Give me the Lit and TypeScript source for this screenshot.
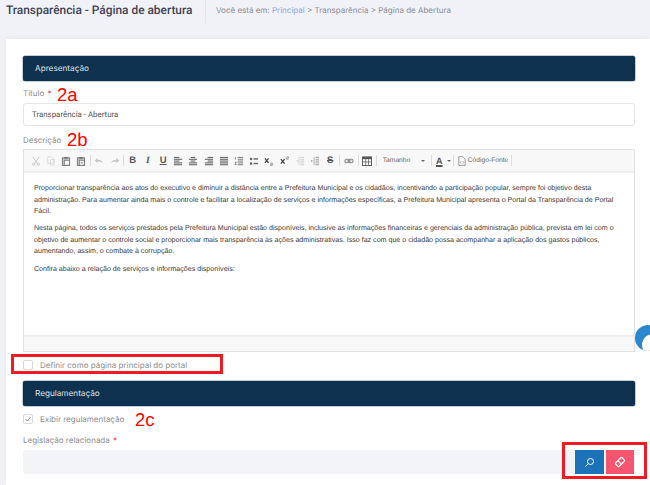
import { LitElement, html, css, svg } from "lit";
import { customElement } from "lit/decorators.js";

const ic = (body: unknown, w = 15.2) => html`<span class="btn" style="width:${w}px"><svg width="10" height="10" viewBox="0 0 11 11">${body}</svg></span>`;
const sep = html`<span class="sep"></span>`;
const G = "#666";
const L = "#c4c4c4";
const lines = (rows: [number, number][], c = G) => rows.map(([a, b], i) => svg`<rect x="${a}" y="${1 + i * 2}" width="${b - a}" height="1.2" fill="${c}"/>`);

@customElement("app-root")
export class AppRoot extends LitElement {
  static styles = css`
    :host { display: block; width: 650px; height: 485px; overflow: hidden; position: relative; background: #f1f2f8; font-family: "Inter", "Liberation Sans", sans-serif; color: #8a8a8a; text-rendering: geometricPrecision; }
    .top { height: 39px; display: flex; align-items: flex-start; padding-left: 6px; box-sizing: border-box; }
    h1 { margin: 0; padding-top: 1px; width: 199px; font: 500 11.9px/19px Roboto, sans-serif; color: #3f4254; white-space: nowrap; box-sizing: content-box; }
    .crumbs { border-left: 1px solid #e6e7ee; height: 23px; padding-left: 10px; font-size: 8px; line-height: 20px; color: #8b8b95; white-space: nowrap; }
    .crumbs b { font-weight: 400; color: #88a7d8; }
    .card { background: #fff; margin-left: 6px; height: 446px; padding: 17px 15px 0 17px; box-sizing: border-box; box-shadow: 0 -2px 4px rgba(0,0,0,.03); }
    .bar { height: 25px; background: #0e314f; border-radius: 2px; color: #dfe5ea; font-size: 8.2px; line-height: 25px; padding-left: 12px; box-shadow: 0 0 0 .5px #8c9aa8; }
    label { display: block; font-size: 8px; line-height: 12px; color: #8d8d8d; }
    label i { font-style: normal; color: #e33; margin-left: 1px; }
    .l1 { margin-top: 6px; height: 16px; }
    .l2 { margin-top: 8px; height: 15px; }
    .input { height: 23px; border: 1px solid #e6e6e6; border-radius: 3px; box-sizing: border-box; font: 7.9px/21px Roboto, sans-serif; color: #555; padding-left: 8px; }
    .editor { height: 203px; border: 1px solid #e2e2e2; box-sizing: border-box; display: flex; flex-direction: column; }
    .tools { height: 23px; background: #f8f8f8; border-bottom: 2px solid #eee; display: flex; align-items: center; padding-left: 4px; flex: none; box-sizing: border-box; font: 6.7px "Liberation Sans", sans-serif; color: #666; }
    .btn { display: inline-flex; justify-content: center; align-items: center; flex: none; }
    .sep { width: 1px; height: 11px; background: #ddd; margin: 0 1px; flex: none; }
    .t { font-weight: 700; font-size: 9.5px; color: #555; width: 15.2px; text-align: center; flex: none; font-family: "Liberation Sans", sans-serif; }
    .size { width: 52px; padding: 0 5px; box-sizing: border-box; display: flex; justify-content: space-between; flex: none; }
    .caret { width: 0; height: 0; border: 2px solid transparent; border-top: 2.5px solid #666; border-bottom: 0; align-self: center; }
    .body { flex: 1; padding: 10px 10px 0; font: 7.1px/11.6px "Liberation Sans", Arial, sans-serif; color: #3c3c3c; }
    .body p { margin: 0 0 5.5px; white-space: nowrap; }
    .foot { height: 16px; background: #f8f8f8; border-top: 2px solid #eee; flex: none; box-sizing: border-box; }
    .check { display: flex; align-items: center; gap: 7px; font-size: 8px; color: #8d8d8d; height: 12px; }
    .box { width: 10px; height: 10px; border: 1px solid #d8d8e0; border-radius: 2px; box-sizing: border-box; display: flex; flex: none; }
    .c1 { margin: 6.5px 0 10.5px; }
    .c2 { margin: 7px 0 9px; }
    .legis { height: 16px; }
    .field { height: 24px; background: #f3f4f8; border-radius: 3px; display: flex; justify-content: flex-end; gap: 2px; padding-right: 1px; }
    .act { height: 24px; display: flex; align-items: center; justify-content: center; }
    .blue { width: 29px; background: #1b72b8; }
    .pink { width: 28px; background: #f6556f; }
    .ann { position: absolute; color: #f00; font: 18.5px/20px "Liberation Sans", sans-serif; }
    .red { position: absolute; border: 3px solid #ed1c24; box-sizing: border-box; }
    .r1 { left: 11px; top: 354px; width: 212px; height: 20px; }
    .r2 { left: 562px; top: 442px; width: 85px; height: 37px; }
    .a1 { left: 57px; top: 85px; }
    .a2 { left: 67px; top: 130px; }
    .a3 { left: 135px; top: 410px; }
    .fab { position: absolute; left: 635px; top: 325px; width: 26px; height: 26px; border-radius: 50%; background: #2a87cf; overflow: hidden; }
    .fab::after { content: ""; position: absolute; left: 7px; top: 9px; width: 22px; height: 22px; border-radius: 50%; background: #fff; }
    .it { font-style: italic; font-family: "Liberation Serif", serif; }
    .un { text-decoration: underline; }
    .st { text-decoration: line-through; }
    .fa { width: 13px; font-size: 9px; text-decoration: underline; text-decoration-thickness: 2px; }
    .fc { margin: 0 1px; }
    .code { margin-left: -1px; flex: none; }
    .last { margin-left: 3px; }
  `;

  render() {
    const tools = html`
      ${ic(svg`<path d="M2 1l5 7M9 1L4 8" stroke="${L}" fill="none"/><circle cx="3" cy="9" r="1.3" fill="none" stroke="${L}"/><circle cx="8" cy="9" r="1.3" fill="none" stroke="${L}"/>`)}
      ${ic(svg`<path d="M2 1h4l2 2v5H2zM5 4h4v6H5z" fill="#fff" stroke="#d4d4d4" stroke-width=".9"/>`)}
      ${ic(svg`<rect x="1.5" y="2" width="8" height="8.5" fill="#bbb" stroke="#777"/><rect x="3.5" y="1" width="4" height="2" fill="#777"/><rect x="4" y="5" width="5" height="5" fill="#fff" stroke="#777" stroke-width=".7"/>`)}
      ${ic(svg`<rect x="1.5" y="2" width="8" height="8.5" fill="#bbb" stroke="#777"/><rect x="3.5" y="1" width="4" height="2" fill="#777"/><rect x="4" y="5" width="5" height="5" fill="#fff" stroke="#777" stroke-width=".7"/><path d="M5 7.5h3" stroke="#777"/>`)}
      ${sep}
      ${ic(svg`<path d="M1 5l3-3v2c3 0 5 1 6 4-2-2-3-2-6-2v2z" fill="${L}"/>`)}
      ${ic(svg`<path d="M10 5L7 2v2C4 4 2 5 1 8c2-2 3-2 6-2v2z" fill="${L}"/>`)}
      ${sep}
      <span class="t">B</span>
      <span class="t it">I</span>
      <span class="t un">U</span>
      ${ic(lines([[1, 7], [1, 10], [1, 7], [1, 10], [1, 10]]))}
      ${ic(lines([[3, 8], [1, 10], [3, 8], [1, 10], [1, 10]]))}
      ${ic(lines([[4, 10], [1, 10], [4, 10], [1, 10], [1, 10]]))}
      ${ic(lines([[1, 10], [1, 10], [1, 10], [1, 10], [1, 10]]))}
      ${ic(svg`${lines([[4, 10], [4, 10], [4, 10], [4, 10], [4, 10]], "#888")}<path d="M1.5 1v3M1 7h1.6L1 9.5h2" stroke="#666" stroke-width=".8" fill="none"/>`)}
      ${ic(svg`<rect x="1" y="2" width="2.5" height="2.5" fill="${G}"/><rect x="1" y="7" width="2.5" height="2.5" fill="${G}"/><rect x="5" y="2.5" width="5" height="1.5" fill="${G}"/><rect x="5" y="7.5" width="5" height="1.5" fill="${G}"/>`)}
      ${ic(svg`<path d="M1 2.5l4 5M5 2.5l-4 5" stroke="#444" stroke-width="1.4"/><path d="M7 8h2.5v1.2H7v1.3h2.5" stroke="#777" stroke-width=".7" fill="none"/>`)}
      ${ic(svg`<path d="M1 3.5l4 5M5 3.5l-4 5" stroke="#444" stroke-width="1.4"/><path d="M7 1h2.5v1.2H7v1.3h2.5" stroke="#777" stroke-width=".7" fill="none"/>`)}
      ${ic(svg`${lines([[6, 10], [6, 10], [6, 10], [6, 10], [6, 10]], "#d4d4d4")}<path d="M4.5 1v9" stroke="#d4d4d4"/><path d="M3.5 4L1 5.5 3.5 7z" fill="#d4d4d4"/>`)}
      ${ic(svg`${lines([[6, 10], [6, 10], [6, 10], [6, 10], [6, 10]], "#aaa")}<path d="M4.5 1v9" stroke="#aaa"/><path d="M1 4l2.5 1.5L1 7z" fill="#aaa"/>`)}
      <span class="t st">S</span>
      ${sep}
      ${ic(svg`<rect x="1" y="3.5" width="4.8" height="4" rx="2" fill="none" stroke="#888" stroke-width="1.2"/><rect x="5.2" y="3.5" width="4.8" height="4" rx="2" fill="none" stroke="#888" stroke-width="1.2"/><path d="M3 5.5h5" stroke="#888"/>`, 16)}
      ${sep}
      ${ic(svg`<rect x=".5" y="1" width="10" height="9.5" fill="#fff" stroke="#555"/><rect x=".5" y="1" width="10" height="2.5" fill="#555"/><path d="M4 3.5v7M7.2 3.5v7M.5 6.5h10" stroke="#555" stroke-width=".8"/>`, 15)}
      ${sep}
      <span class="size">Tamanho<span class="caret"></span></span>
      ${sep}
      <span class="t fa">A</span>
      <span class="caret fc"></span>
      ${sep}
      ${ic(svg`<path d="M2 .8h4.5L9 3.3v7H2z" fill="#fff" stroke="#777" stroke-width=".8"/><path d="M4.7 5.5L3.5 7l1.2 1.5M6.3 5.5L7.5 7 6.3 8.5" stroke="#777" stroke-width=".7" fill="none"/>`, 14)}
      <span class="code">Código-Fonte</span>
      <span class="sep last"></span>
    `;
    return html`
      <div class="top">
        <h1>Transparência - Página de abertura</h1>
        <div class="crumbs">Você está em: <b>Principal</b> &gt; Transparência &gt; Página de Abertura</div>
      </div>
      <div class="card">
        <div class="bar">Apresentação</div>
        <label class="l1">Título <i>*</i></label>
        <div class="input">Transparência - Abertura</div>
        <label class="l2">Descrição</label>
        <div class="editor">
          <div class="tools">${tools}</div>
          <div class="body">
            <p>Proporcionar transparência aos atos do executivo e diminuir a distância entre a Prefeitura Municipal e os cidadãos, incentivando a participação popular, sempre foi objetivo desta<br>administração. Para aumentar ainda mais o controle e facilitar a localização de serviços e informações específicas, a Prefeitura Municipal apresenta o Portal da Transparência de Portal<br>Fácil.</p>
            <p>Nesta página, todos os serviços prestados pela Prefeitura Municipal estão disponíveis, inclusive as informações financeiras e gerenciais da administração pública, prevista em lei com o<br>objetivo de aumentar o controle social e proporcionar mais transparência às ações administrativas. Isso faz com que o cidadão possa acompanhar a aplicação dos gastos públicos,<br>aumentando, assim, o combate à corrupção.</p>
            <p>Confira abaixo a relação de serviços e informações disponíveis:</p>
          </div>
          <div class="foot"></div>
        </div>
        <div class="check c1"><span class="box"></span>Definir como página principal do portal</div>
        <div class="bar">Regulamentação</div>
        <div class="check c2"><span class="box"><svg width="8" height="8" viewBox="0 0 8 8"><path d="M1.5 4l2 2L6.5 2" fill="none" stroke="#8a8fa8"/></svg></span>Exibir regulamentação</div>
        <label class="legis">Legislação relacionada <i>*</i></label>
        <div class="field">
          <div class="act blue"><svg width="11" height="11" viewBox="0 0 11 11"><circle cx="6.5" cy="4.5" r="3" fill="none" stroke="#fff"/><path d="M4.3 6.7L1.5 9.5" stroke="#fff"/></svg></div>
          <div class="act pink"><svg width="12" height="12" viewBox="0 0 12 12"><g transform="rotate(-45 6 6)" fill="none" stroke="#fff" stroke-width="1.2"><rect x="1.5" y="3.5" width="9" height="5" rx="1"/><path d="M5.5 3.5v5"/></g></svg></div>
        </div>
      </div>
      <div class="ann a1">2a</div>
      <div class="ann a2">2b</div>
      <div class="ann a3">2c</div>
      <div class="red r1"></div>
      <div class="red r2"></div>
      <div class="fab"></div>
    `;
  }
}
